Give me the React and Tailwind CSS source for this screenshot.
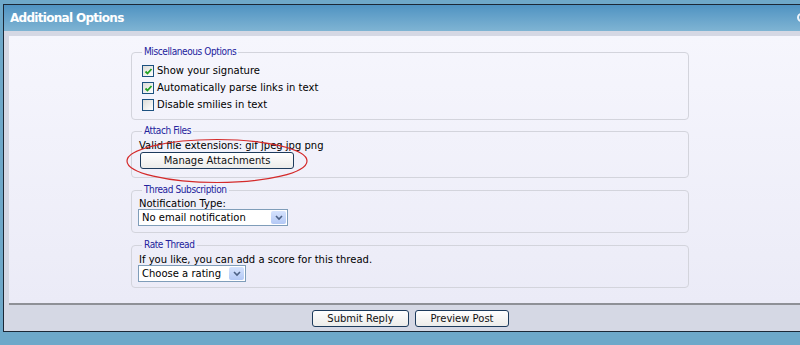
import React from 'react'

const FONT = { fontFamily: 'Verdana, "DejaVu Sans", sans-serif' }
const LEGEND_FONT = { fontFamily: 'Tahoma, "DejaVu Sans Condensed", "Liberation Sans", sans-serif' }

function Check({ checked }) {
  return (
    <span className="inline-flex h-[12px] w-[12px] shrink-0 items-center justify-center border border-[#1c5180] bg-gradient-to-br from-[#dcdcd7] to-white">
      {checked && (
        <svg width="9" height="9" viewBox="0 0 9 9">
          <path d="M1.5 4.5 L3.5 6.5 L7.5 2" fill="none" stroke="#21a121" strokeWidth="1.8" />
        </svg>
      )}
    </span>
  )
}

function Select({ label, width }) {
  return (
    <div className={`-ml-[1px] flex h-[17px] items-stretch border border-[#7f9db9] bg-white ${width}`}>
      <span className="flex-1 truncate pl-[3px] text-[10px] leading-[15px] text-black">{label}</span>
      <span className="m-[1px] flex w-[15px] items-center justify-center rounded-[2px] bg-gradient-to-b from-[#d6e3fd] to-[#b3c8f5]">
        <svg width="8" height="6" viewBox="0 0 8 6">
          <path d="M1 1 L4 4 L7 1" fill="none" stroke="#4d6185" strokeWidth="1.6" />
        </svg>
      </span>
    </div>
  )
}

function Button({ children, width }) {
  return (
    <button className={`h-[17px] rounded-[3px] border border-[#1d3b5c] bg-gradient-to-b from-white to-[#ececea] text-[10px] leading-[15px] text-[#111] ${width}`}>
      {children}
    </button>
  )
}

function Box({ legend, children, className = '' }) {
  return (
    <fieldset className={`rounded-[4px] border border-[#d3d4dc] px-[7px] ${className}`}>
      <legend className="ml-[3px] px-[2px] text-[10px] leading-[12px] tracking-[-0.4px] text-[#22229c]" style={LEGEND_FONT}>{legend}</legend>
      {children}
    </fieldset>
  )
}

export default function App() {
  return (
    <div className="h-[345px] w-[800px] overflow-hidden bg-[#6ea8c9] pl-[3px] pt-[4px]" style={FONT}>
      <div className="w-[820px] border-b border-l border-t border-[#1c2836]">
        {/* Titre */}
        <div className="relative flex h-[26px] items-center bg-gradient-to-b from-[#4f93c2] to-[#7fb4d3] pl-[6px]">
          <span className="text-[12px] font-bold tracking-[-0.7px] text-white">Additional Options</span>
          <span className="absolute left-[793px] top-[8px] h-[9px] w-[9px] rounded-full border-2 border-[#eef4fa]" />
        </div>

        <div className="bg-[#d5d8e4] pl-[5px] pt-[5px]">
          <div className="border-b-2 border-[#8e9096] bg-gradient-to-b from-[#f6f6fd] to-[#ebebf7] pb-[15px] pt-[10px]">
            <div className="ml-[122px] flex w-[558px] flex-col gap-[5px]">
              <Box legend="Miscellaneous Options" className="pb-[8px]">
                <div className="flex flex-col gap-[5px] pl-[3px] pt-[7px] text-[10px] leading-[12px] text-black">
                  <label className="flex items-center gap-[3px]"><Check checked />Show your signature</label>
                  <label className="flex items-center gap-[3px]"><Check checked />Automatically parse links in text</label>
                  <label className="flex items-center gap-[3px]"><Check />Disable smilies in text</label>
                </div>
              </Box>

              <Box legend="Attach Files" className="relative pb-[8px]">
                <div className="pt-[3px] text-[10px] leading-[12px] text-black">Valid file extensions: gif jpeg jpg png</div>
                <div className="flex pl-[1px]">
                  <Button width="w-[154px]">Manage Attachments</Button>
                </div>
                <svg className="pointer-events-none absolute left-[-7px] top-[1px]" width="184" height="46" viewBox="0 0 184 46">
                  <ellipse cx="92" cy="23" rx="90" ry="21.5" fill="none" stroke="#d42a2a" strokeWidth="1.2" />
                </svg>
              </Box>

              <Box legend="Thread Subscription" className="mt-[1px] pb-[6px]">
                <div className="pt-[2px] text-[10px] leading-[11px] text-black">Notification Type:</div>
                <div className="flex">
                  <Select label="No email notification" width="w-[150px]" />
                </div>
              </Box>

              <Box legend="Rate Thread" className="mt-[1px] pb-[5px]">
                <div className="pt-[3px] text-[10px] leading-[11px] text-black">If you like, you can add a score for this thread.</div>
                <div className="flex">
                  <Select label="Choose a rating" width="w-[108px]" />
                </div>
              </Box>
            </div>
          </div>

          {/* Boutons */}
          <div className="flex h-[26px] items-center gap-[6px] pl-[303px]">
            <Button width="w-[97px]">Submit Reply</Button>
            <Button width="w-[94px]">Preview Post</Button>
          </div>
        </div>
      </div>
    </div>
  )
}
